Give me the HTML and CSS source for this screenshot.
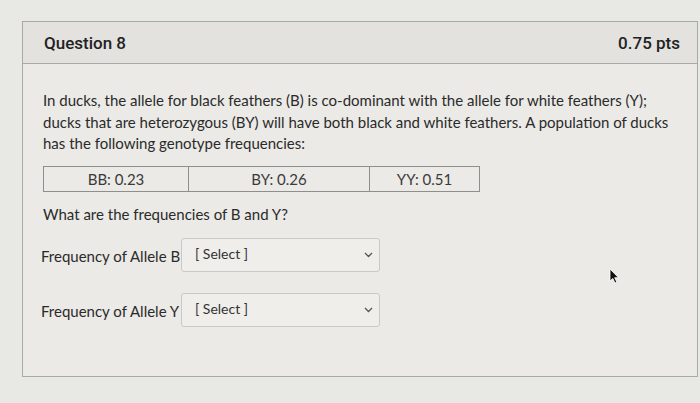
FILE: index.html
```html
<!DOCTYPE html>
<html>
<head>
<meta charset="utf-8">
<link rel="stylesheet" href="styles.css">
</head>
<body>
<div class="page">
  <div class="card">
    <div class="card-header">
      <div class="q-title">Question 8</div>
      <div class="q-pts">0.75 pts</div>
    </div>
    <div class="card-body">
      <p class="prompt">In ducks, the allele for black feathers (B) is co-dominant with the allele for white feathers (Y); ducks that are heterozygous (BY) will have both black and white feathers. A population of ducks has the following genotype frequencies:</p>
      <table class="geno">
        <tr>
          <td class="c1">BB: 0.23</td>
          <td class="c2">BY: 0.26</td>
          <td class="c3">YY: 0.51</td>
        </tr>
      </table>
      <p class="ask">What are the frequencies of B and Y?</p>
      <div class="answer-row first">
        <span class="label">Frequency of Allele B</span>
        <div class="select"><span class="sel-text">[ Select ]</span>
          <svg class="chev" width="9" height="6" viewBox="0 0 9 6"><path d="M1 1 L4.5 4.5 L8 1" fill="none" stroke="#555" stroke-width="1.3"/></svg>
        </div>
      </div>
      <div class="answer-row second">
        <span class="label">Frequency of Allele Y</span>
        <div class="select"><span class="sel-text">[ Select ]</span>
          <svg class="chev" width="9" height="6" viewBox="0 0 9 6"><path d="M1 1 L4.5 4.5 L8 1" fill="none" stroke="#555" stroke-width="1.3"/></svg>
        </div>
      </div>
      <svg class="cursor" width="11" height="16" viewBox="0 0 11 16"><path d="M1 1 L1 13 L3.8 10.4 L6 15 L7.8 14.1 L5.7 9.7 L9.5 9.7 Z" fill="#111" stroke="#fff" stroke-width="0.8"/></svg>
    </div>
  </div>
</div>
</body>
</html>
```

FILE: styles.css
```css
html, body {
  margin: 0;
  padding: 0;
  background: #e8e8e5;
}
.page {
  padding: 21px 2px 0 22px;
  height: 403px;
  box-sizing: border-box;
}
.card {
  width: 676px;
  height: 356px;
  box-sizing: border-box;
  border: 1px solid #a9a9a6;
  background: #ebeae7;
  font-family: Lato, "Liberation Sans", sans-serif;
  color: #2a2a2a;
}
.card-header {
  height: 42px;
  box-sizing: border-box;
  background: #e3e2df;
  border-bottom: 1px solid #a9a9a6;
  display: flex;
  align-items: center;
  justify-content: space-between;
  padding: 0 17px 0 21px;
  font-family: Roboto, "Liberation Sans", sans-serif;
  font-weight: 500;
  font-size: 17px;
  color: #222;
}
.card-body {
  position: relative;
  padding: 26px 20px 0 20px;
  height: 312px;
  box-sizing: border-box;
}
.prompt {
  margin: 0;
  font-size: 15px;
  line-height: 21.5px;
  color: #2a2a2a;
}
.geno {
  margin-top: 11px;
  border-collapse: collapse;
  font-size: 15px;
  color: #3a3a3a;
}
.geno td {
  border: 1px solid #8e8e8c;
  height: 24px;
  padding: 0;
  text-align: center;
}
.geno .c1 { width: 144px; }
.geno .c2 { width: 180px; }
.geno .c3 { width: 109px; }
.ask {
  margin: 12px 0 0 0;
  font-size: 15px;
  line-height: 21px;
  color: #2a2a2a;
}
.answer-row {
  display: flex;
  align-items: center;
  margin-left: -2px;
}
.answer-row.first {
  margin-top: 16px;
}
.answer-row.second {
  margin-top: 24px;
}
.label {
  font-size: 15px;
  color: #2a2a2a;
  width: 140px;
  white-space: nowrap;
}
.select {
  width: 199px;
  height: 34px;
  box-sizing: border-box;
  border: 1px solid #c9c9c6;
  border-radius: 3px;
  background: #efeeeb;
  display: flex;
  align-items: center;
  justify-content: space-between;
  padding: 0 6px 0 13px;
  margin-top: -3px;
}
.sel-text {
  font-size: 14px;
  color: #333;
  margin-top: -2px;
}
.cursor {
  position: absolute;
  left: 586px;
  top: 204px;
}
```
